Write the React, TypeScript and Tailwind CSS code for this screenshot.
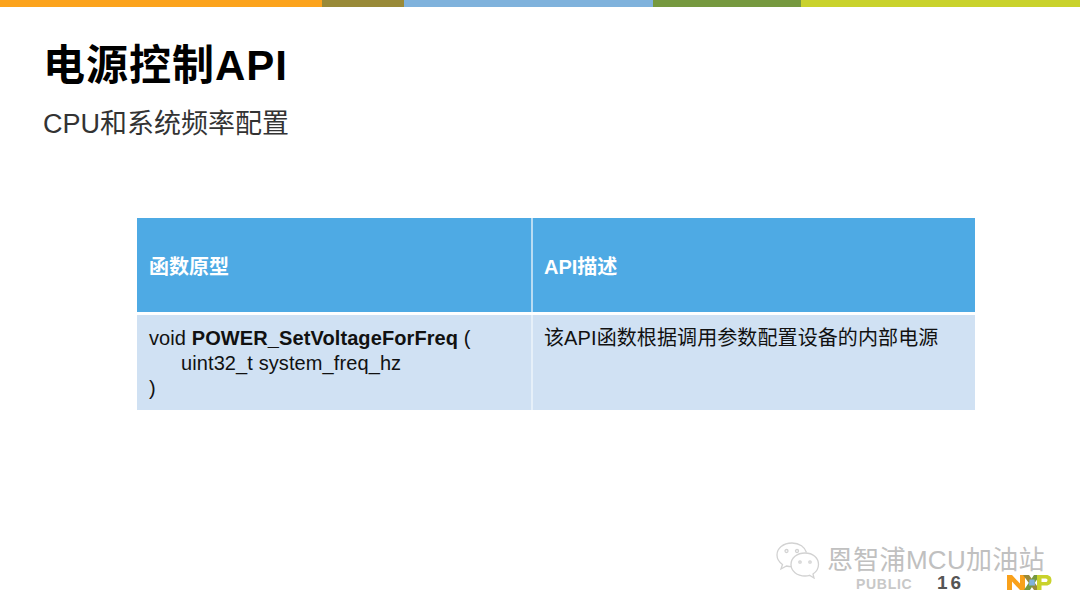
export default function App() {
  const sans = "font-['Liberation_Sans','Noto_Sans_CJK_SC',sans-serif]";
  return (
    <div className={`relative w-[1080px] h-[608px] overflow-hidden bg-white ${sans}`}>
      <div className="flex h-[7px]">
        <div className="w-[322px] bg-[#fca31c]" />
        <div className="w-[82px] bg-[#998a38]" />
        <div className="w-[249px] bg-[#7fb2dc]" />
        <div className="w-[148px] bg-[#76993f]" />
        <div className="flex-1 bg-[#c9d22c]" />
      </div>
      <div className="pl-[43px] pt-[35px]">
        <h1 className="text-[42px] leading-[48px] font-bold text-black tracking-[1px]">电源控制API</h1>
        <p className="mt-[18px] text-[27px] leading-[32px] text-[#333333]">CPU和系统频率配置</p>
      </div>
      <div className="ml-[137px] mt-[78px] w-[838px]">
        <div className="flex h-[94px] text-white font-bold text-[20px]">
          <div className="w-[394px] bg-[#4eaae4] flex items-center pl-[12px] pt-[3px]">函数原型</div>
          <div className="w-[2px] bg-[#b8dcf3]" />
          <div className="flex-1 bg-[#4eaae4] flex items-center pl-[11px] pt-[3px]">API描述</div>
        </div>
        <div className="flex h-[95px] mt-[3px] text-[20px] leading-[25px] text-[#111111] tracking-[0.1px]">
          <div className="w-[394px] bg-[#d0e1f3] pl-[12px] pt-[11px]">
            <div>void <b>POWER_SetVoltageForFreq</b> (</div>
            <div className="pl-[32px]">uint32_t system_freq_hz</div>
            <div>)</div>
          </div>
          <div className="w-[2px] bg-[#e6f0f9]" />
          <div className="flex-1 bg-[#d0e1f3] pl-[11px] pt-[11px]">该API函数根据调用参数配置设备的内部电源</div>
        </div>
      </div>

      <svg className="absolute left-[775px] top-[541px]" width="46" height="38" viewBox="0 0 46 38" fill="none" stroke="#d2d2d2" strokeWidth="1.3">
        <path d="M17 2C8 2 2 7.500 2 14c0 4 2 7 5.500 9.500L6 28l5.500-3c1.800.5 3.500.7 5.500.7" fill="#ffffff" />
        <path d="M17 2c7.500 0 13 4 14.500 9.500" />
        <path d="M30 12c-8 0-14 5-14 11.500S22 35 30 35c1.800 0 3-.2 4.500-.7L39 37l-1-4c3.500-2.300 5.500-5.500 5.500-9.500C43.500 17 38 12 30 12z" fill="#ffffff" />
        <circle cx="11.500" cy="10" r="1.500" />
        <circle cx="22" cy="10" r="1.500" />
        <circle cx="25" cy="21" r="1.200" />
        <circle cx="35" cy="21" r="1.200" />
      </svg>
      <div className="absolute left-[827px] top-[546px] text-[26px] leading-[28px] text-[#c0c0c0] tracking-[0.3px] whitespace-nowrap">恩智浦MCU加油站</div>
      <div className="absolute left-[856px] top-[576px] text-[14px] leading-[16px] font-bold text-[#c8c8c8] tracking-[0.7px]">PUBLIC</div>
      <div className="absolute left-[937px] top-[575px] text-[19px] leading-[16px] font-bold text-[#555555] tracking-[3px]">16</div>
      <svg className="absolute left-[1007px] top-[575px]" width="45" height="15" viewBox="0 0 45 15">
        <polygon points="0,0 5,0 13,8.500 13,0 18,0 18,15 13,15 5,6.500 5,15 0,15" fill="#f9a11b" />
        <polygon points="16,0 22,0 33,15 27,15" fill="#998a38" />
        <polygon points="27,0 33,0 23,15 17,15" fill="#76993f" />
        <polygon points="22.500,4.500 27.500,4.500 28,10.500 22,10.500" fill="#7fb2dc" />
        <path fillRule="evenodd" d="M30 0H39C43 0 44.500 2.500 44.500 5.200C44.500 8 43 10.500 39 10.500H34.500V15H30ZM34.500 3.500V7H38.500C40 7 40.500 6 40.500 5.200C40.500 4.300 40 3.500 38.500 3.500Z" fill="#c9d22c" />
      </svg>
    </div>
  );
}
